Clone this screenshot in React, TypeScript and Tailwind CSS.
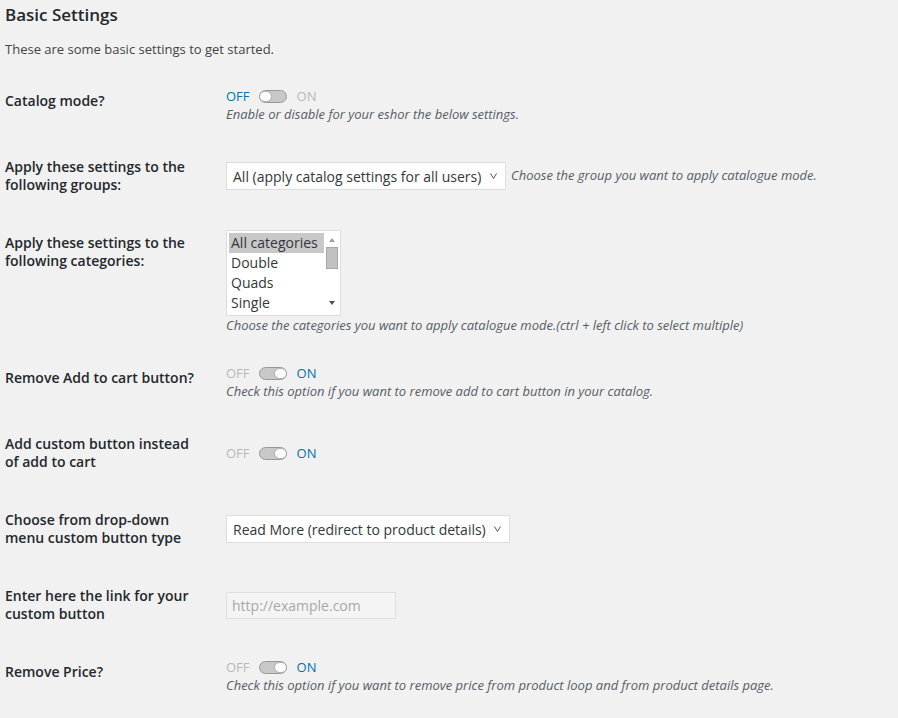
import React from 'react';

function Toggle({ on }: { on: boolean }) {
  return (
    <div className="flex items-center h-[18px] text-[13px] leading-[18px]">
      <span className={on ? 'text-[#b4b9be]' : 'text-[#0073aa]'}>OFF</span>
      <span className="ml-[9px] w-[28px] h-[13px] rounded-[7px] border border-[#999] bg-[#c8c8c8] relative overflow-hidden">
        <span className={'absolute top-0 w-[13px] h-[11px] rounded-[6px] bg-white border border-[#aaa] ' + (on ? 'right-[-1px]' : 'left-[-1px]')} />
      </span>
      <span className={'ml-[10px] ' + (on ? 'text-[#0073aa]' : 'text-[#b4b9be]')}>ON</span>
    </div>
  );
}

function Desc({ children }: { children: React.ReactNode }) {
  return <p className="text-[13px] leading-[18px] italic text-[#555d66]">{children}</p>;
}

function Chevron() {
  return (
    <svg width="7" height="6" viewBox="0 0 7 6" className="ml-auto">
      <path d="M0.5 0.5 L3.5 5.5 L6.5 0.5" fill="none" stroke="#555" strokeWidth="1" />
    </svg>
  );
}

function Row({ label, children }: { label: React.ReactNode; children: React.ReactNode }) {
  return (
    <div className="flex items-center">
      <div className="w-[221px] self-start py-5 pr-[10px] text-[14px] leading-[18px] font-semibold text-[#23282d]">{label}</div>
      <div className="py-[15px]">{children}</div>
    </div>
  );
}

export default function App() {
  return (
    <div className="min-h-[718px] bg-[#f1f1f1] pl-[5px] pt-[4px]" style={{ fontFamily: '"Open Sans", sans-serif' }}>
      <h2 className="text-[17px] leading-[22px] font-semibold text-[#23282d]">Basic Settings</h2>
      <p className="mt-[14px] mb-[13px] text-[13px] leading-[19px] text-[#444]">These are some basic settings to get started.</p>

      <Row label="Catalog mode?">
        <Toggle on={false} />
        <Desc>Enable or disable for your eshor the below settings.</Desc>
      </Row>

      <Row label={<>Apply these settings to the<br />following groups:</>}>
        <div className="flex items-center">
          <div className="w-[280px] h-[28px] bg-white border border-[#ddd] flex items-center pl-[6px] pr-[8px] text-[14px] text-[#32373c]">
            <span>All (apply catalog settings for all users)</span>
            <Chevron />
          </div>
          <span className="ml-[5px] text-[13px] italic text-[#555d66]">Choose the group you want to apply catalogue mode.</span>
        </div>
      </Row>

      <Row label={<>Apply these settings to the<br />following categories:</>}>
        <div className="mt-[1px] w-[115px] h-[86px] bg-white border border-[#ddd] flex pt-[2px] pl-[2px]">
          <div className="flex-1 text-[14px] leading-[20px] text-[#32373c]">
            <div className="bg-[#c8c8c8] pl-[2px]">All categories</div>
            <div className="pl-[2px]">Double</div>
            <div className="pl-[2px]">Quads</div>
            <div className="pl-[2px]">Single</div>
          </div>
          <div className="w-[16px] flex flex-col items-center pb-[6px]">
            <svg width="8" height="12" viewBox="0 0 8 12"><path d="M1 9 L4 5 L7 9 Z" fill="#a0a0a0" /></svg>
            <div className="w-[12px] h-[22px] bg-[#c1c1c1] border border-[#a8a8a8] mt-[2px]" />
            <svg width="8" height="12" viewBox="0 0 8 12" className="mt-auto"><path d="M1 4 L4 8 L7 4 Z" fill="#505050" /></svg>
          </div>
        </div>
        <Desc>Choose the categories you want to apply catalogue mode.(ctrl + left click to select multiple)</Desc>
      </Row>

      <Row label="Remove Add to cart button?">
        <Toggle on={true} />
        <Desc>Check this option if you want to remove add to cart button in your catalog.</Desc>
      </Row>

      <Row label={<>Add custom button instead<br />of add to cart</>}>
        <Toggle on={true} />
      </Row>

      <Row label={<>Choose from drop-down<br />menu custom button type</>}>
        <div className="w-[284px] h-[28px] bg-white border border-[#ddd] flex items-center pl-[6px] pr-[8px] text-[14px] text-[#32373c]">
          <span>Read More (redirect to product details)</span>
          <Chevron />
        </div>
      </Row>

      <Row label={<>Enter here the link for your<br />custom button</>}>
        <input
          disabled
          placeholder="http://example.com"
          className="w-[170px] h-[27px] border border-[#e0e0e0] bg-[#f4f4f4] px-[5px] text-[14px] placeholder:text-[#a8a8a8]"
        />
      </Row>

      <Row label="Remove Price?">
        <Toggle on={true} />
        <Desc>Check this option if you want to remove price from product loop and from product details page.</Desc>
      </Row>
    </div>
  );
}
